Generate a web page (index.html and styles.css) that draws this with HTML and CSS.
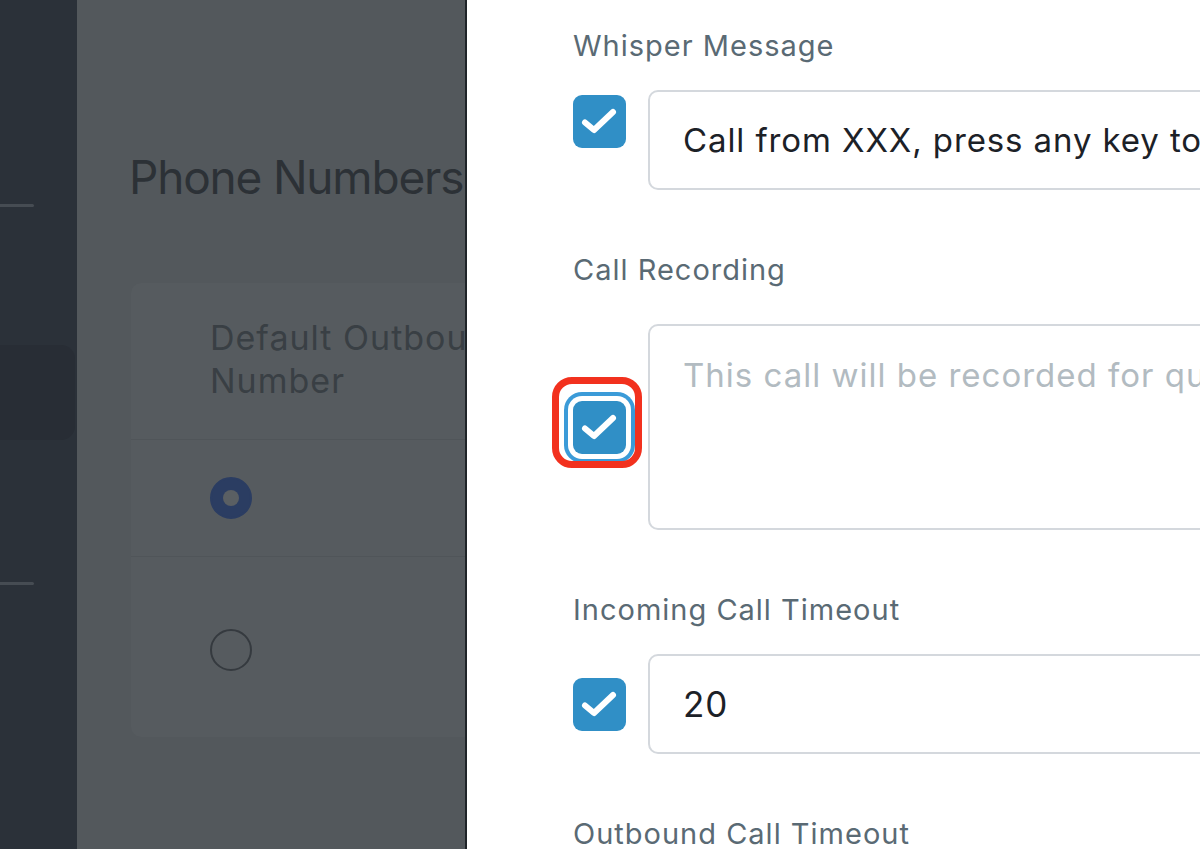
FILE: index.html
```html
<!DOCTYPE html>
<html lang="en">
<head>
<meta charset="utf-8">
<title>Phone Numbers</title>
<link rel="stylesheet" href="styles.css">
</head>
<body>
<div class="app">
  <aside class="sidebar">
    <div class="nav-sep"></div>
    <div class="nav-item"></div>
    <div class="nav-sep second"></div>
  </aside>
  <main class="main">
    <h1 class="page-title">Phone Numbers</h1>
    <div class="card">
      <div class="card-head"><span class="col-title">Default Outbound Number</span></div>
      <div class="card-row"><span class="radio on"></span></div>
      <div class="card-row tall"><span class="radio"></span></div>
    </div>
  </main>
  <section class="panel">
    <div class="field">
      <div class="label">Whisper Message</div>
      <div class="control-row top">
        <span class="check"><svg viewBox="0 0 53 53"><path d="M12 27.5 L21 35 L40 17"/></svg></span>
        <div class="input">Call from XXX, press any key to accept</div>
      </div>
    </div>
    <div class="field">
      <div class="label">Call Recording</div>
      <div class="control-row rec">
        <span class="check focused"><svg viewBox="0 0 53 53"><path d="M12 27.5 L21 35 L40 17"/></svg></span>
        <div class="input area placeholder">This call will be recorded for quality purposes</div>
      </div>
    </div>
    <div class="field">
      <div class="label">Incoming Call Timeout</div>
      <div class="control-row">
        <span class="check"><svg viewBox="0 0 53 53"><path d="M12 27.5 L21 35 L40 17"/></svg></span>
        <div class="input num">20</div>
      </div>
    </div>
    <div class="field">
      <div class="label">Outbound Call Timeout</div>
    </div>
  </section>
</div>
</body>
</html>
```

FILE: styles.css
```css
* { box-sizing: border-box; }
html, body { margin: 0; padding: 0; }
body {
  width: 1200px;
  height: 849px;
  overflow: hidden;
  font-family: Inter, "Noto Sans", "Liberation Sans", sans-serif;
  background: #53585c;
}
.app {
  display: flex;
  height: 849px;
}
.sidebar {
  width: 77px;
  flex: none;
  background: #2b3139;
  padding-top: 204px;
  display: flex;
  flex-direction: column;
}
.nav-sep {
  width: 34px;
  height: 3px;
  background: #464c53;
  border-radius: 0 2px 2px 0;
}
.nav-item {
  margin-top: 138px;
  width: 75px;
  height: 95px;
  background: #282d35;
  border-radius: 0 14px 14px 0;
}
.nav-sep.second { margin-top: 142px; }

.main {
  width: 388px;
  flex: none;
  background: #53585c;
  padding: 149px 0 0 52px;
  overflow: hidden;
}
.page-title {
  margin: 0;
  font-size: 46px;
  font-weight: 400;
  line-height: 57px;
  color: #2c3136;
  white-space: nowrap;
  letter-spacing: -1.2px;
}
.card {
  margin-top: 77px;
  margin-left: 2px;
  width: 700px;
  background: #565b5f;
  border-radius: 10px 0 0 10px;
}
.card-head {
  height: 157px;
  padding: 33px 0 0 79px;
  border-bottom: 1px solid #505559;
}
.col-title {
  display: block;
  width: 330px;
  font-size: 34px;
  line-height: 43px;
  letter-spacing: 1px;
  color: #393f44;
}
.card-row {
  height: 117px;
  padding-left: 79px;
  display: flex;
  align-items: center;
  border-bottom: 1px solid #505559;
}
.card-row.tall {
  height: 180px;
  align-items: flex-start;
  padding-top: 72px;
  border-bottom: none;
}
.radio {
  width: 42px;
  height: 42px;
  border-radius: 50%;
  border: 2px solid #353a3f;
  display: flex;
  align-items: center;
  justify-content: center;
}
.radio.on {
  background: #2b3d62;
  border-color: #2b3d62;
}
.radio.on::after {
  content: "";
  width: 16px;
  height: 16px;
  border-radius: 50%;
  background: #5a5f63;
}

.panel {
  flex: 1;
  background: #fff;
  border-left: 2px solid #1f2428;
  padding: 29px 0 0 106px;
  overflow: hidden;
}
.field + .field { margin-top: 63px; }
.label {
  font-size: 29px;
  line-height: 34px;
  letter-spacing: 1px;
  color: #5a6a74;
  white-space: nowrap;
}
.control-row {
  display: flex;
  align-items: center;
  gap: 22px;
  margin-top: 27px;
  width: 1000px;
}
.control-row.top { align-items: flex-start; }
.control-row.top .check { margin-top: 5px; }
.control-row.rec { margin-top: 37px; }
.check {
  position: relative;
  width: 53px;
  height: 53px;
  flex: none;
  background: #308fc6;
  border-radius: 9px;
  display: flex;
}
.check svg { width: 53px; height: 53px; }
.check path {
  fill: none;
  stroke: #fff;
  stroke-width: 6;
  stroke-linecap: round;
  stroke-linejoin: round;
}
.check.focused {
  box-shadow: 0 0 0 5px #fff, 0 0 0 9px #3b9bd8;
}
.check.focused::after {
  content: "";
  position: absolute;
  left: -21px;
  right: -16px;
  top: -24px;
  bottom: -14px;
  border: 7px solid #f2311e;
  border-radius: 20px;
}
.input {
  flex: 1;
  height: 100px;
  border: 2px solid #d4d8dd;
  border-radius: 10px;
  padding: 0 0 0 33px;
  display: flex;
  align-items: center;
  font-size: 33px;
  letter-spacing: 0.9px;
  color: #1c2127;
  white-space: nowrap;
}
.input.num { font-size: 35px; }
.input.area {
  height: 206px;
  align-items: flex-start;
  padding-top: 29px;
  line-height: 40px;
}
.input.placeholder {
  color: #b2bbc1;
  letter-spacing: 1px;
}
```
